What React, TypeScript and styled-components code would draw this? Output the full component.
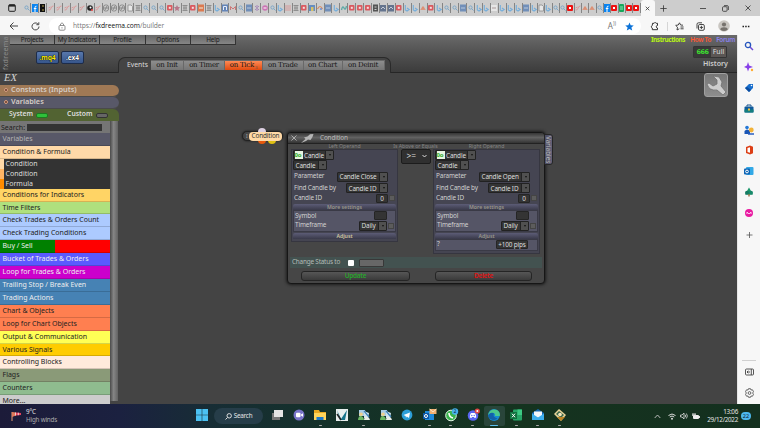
import React from 'react';
import styled, { createGlobalStyle } from 'styled-components';

const GlobalStyle = createGlobalStyle`
  * {
    box-sizing: border-box;
  }
  body {
    margin: 0;
    overflow: hidden;
    font-family: 'Noto Sans', 'Open Sans', sans-serif;
  }
  svg {
    display: block;
    flex: none;
  }
`;

const Screen = styled.div`
  width: 760px;
  height: 428px;
  display: flex;
  flex-direction: column;
  background: #444;
  font-size: 7px;
  line-height: 1;
  white-space: nowrap;
  overflow: hidden;
`;

// Browser chrome
const TabStrip = styled.div`
  height: 16px;
  flex: none;
  display: flex;
  background: #cdcdcd;
`;

const TabMenu = styled.div`
  width: 23.5px;
  padding: 4px 0 0 8px;
`;

const MiniTab = styled.div<{ $narrow?: boolean }>`
  width: ${(p) => (p.$narrow ? 7.35 : 7.93)}px;
  height: 16px;
  flex: none;
  display: flex;
  align-items: center;
  justify-content: center;
  border-right: 1px solid #8f8f8f;
  border-image: linear-gradient(transparent 20%, #858585 20%, #858585 80%, transparent 80%) 1;
`;

const ActiveTab = styled.div`
  width: 14px;
  height: 16px;
  background: #f7f7f7;
  border-radius: 3px 3px 0 0;
  display: flex;
  align-items: center;
  justify-content: center;
`;

const WindowButtons = styled.div`
  flex: 1;
  display: flex;
  align-items: center;
  padding-left: 5px;
`;

const AddressBar = styled.div`
  height: 19px;
  flex: none;
  display: flex;
  align-items: center;
  background: #f7f7f7;
  padding: 1px 0 0 9px;
`;

const UrlField = styled.div`
  width: 592px;
  height: 16px;
  margin-left: 9px;
  padding: 0 7px 0 9px;
  display: flex;
  align-items: center;
  border-radius: 8px;
  background: #fff;
`;

const Url = styled.div`
  flex: 1;
  margin-left: 7px;
  font-family: 'Open Sans', sans-serif;
  font-size: 6.7px;
  letter-spacing: -0.05px;
  color: #777;
  b {
    font-weight: 400;
    color: #111;
  }
`;

const ToolIcons = styled.div`
  flex: 1;
  display: flex;
  align-items: center;
  padding-left: 9px;
`;

const Middle = styled.div`
  height: 369px;
  flex: none;
  display: flex;
`;

const Page = styled.div`
  width: 737px;
  display: flex;
  flex-direction: column;
  background: #444;
`;

const EdgeBar = styled.div`
  flex: 1;
  display: flex;
  flex-direction: column;
  align-items: center;
  background: #f7f7f7;
  border-left: 1px solid #e6e6e6;
  padding-top: 6px;
`;

const EdgeItem = styled.div<{ $h?: number }>`
  height: ${(p) => p.$h || 20.9}px;
  display: flex;
  flex: none;
  justify-content: center;
`;

const EdgeRule = styled.div`
  width: 14px;
  height: 1px;
  margin: auto 0 7px;
  background: #d0d0d0;
`;

// Site header
const Header = styled.div`
  height: 38px;
  flex: none;
  display: flex;
  background: linear-gradient(#6a6a6a, #585858 35%, #3c3c3c);
  border-bottom: 1px solid #262626;
`;

const Brand = styled.div`
  width: 10px;
  display: flex;
  align-items: center;
  justify-content: center;
  writing-mode: vertical-rl;
  transform: rotate(180deg);
  color: #8e8e8e;
  font-size: 7px;
  letter-spacing: 0.3px;
`;

const HeaderMain = styled.div`
  flex: 1;
`;

const Menu = styled.div`
  width: 226px;
  height: 9.5px;
  display: flex;
  background: linear-gradient(#666, #868686);
  border-bottom: 1px solid #333;
`;

const MenuItem = styled.div`
  flex: 1;
  height: 9px;
  border-right: 1px solid #333;
  text-align: center;
  font-size: 6.4px;
  letter-spacing: -0.15px;
  line-height: 9px;
  color: #1c1c1c;
`;

const HeaderLower = styled.div`
  display: flex;
  height: 28.5px;
`;

const FileButtons = styled.div`
  width: 108px;
  padding: 6.5px 0 0 26px;
  display: flex;
  gap: 2px;
`;

const FileButton = styled.div<{ $color: string }>`
  width: 23px;
  height: 13px;
  border: 1px solid #1d2c4a;
  border-radius: 2px;
  background: linear-gradient(#5878ac, #37568c);
  color: ${(p) => p.$color};
  font-size: 6.6px;
  font-weight: 700;
  line-height: 11px;
  text-align: center;
  text-shadow: 0 0 1px #000, 0 0 1px #000;
`;

const EventsTab = styled.div`
  width: 273px;
  height: 16px;
  margin-top: 12.5px;
  padding: 2.4px 0 0 8px;
  display: flex;
  background: #444;
  border: 1px solid #2a2a2a;
  border-bottom: 0;
  border-radius: 7px 7px 0 0;
`;

const EventsLabel = styled.div`
  width: 24px;
  font-size: 6.8px;
  line-height: 9px;
  color: #ddd;
`;

const EventButton = styled.div<{ $w: number; $active?: boolean }>`
  width: ${(p) => p.$w}px;
  height: 10px;
  background: ${(p) => (p.$active ? 'linear-gradient(#ff8a55, #e04a10)' : 'linear-gradient(#8d8d8d, #757575)')};
  border: 1px solid #686868;
  border-width: 1px 1px 0 0;
  color: #161616;
  font-family: 'DejaVu Serif', serif;
  font-size: 7px;
  letter-spacing: -0.28px;
  line-height: 8px;
  text-align: center;
  sub {
    font-size: 4px;
    line-height: 1px;
    color: #555;
  }
`;

const HeaderRight = styled.div`
  width: 100px;
  padding-right: 9px;
  display: flex;
  flex-direction: column;
  align-items: flex-end;
`;

const Links = styled.div`
  display: flex;
  gap: 5px;
  margin-right: -7px;
  height: 10px;
  font-size: 6.4px;
  line-height: 9px;
`;

const SiteLink = styled.span<{ $color: string; $bold?: boolean }>`
  color: ${(p) => p.$color};
  font-weight: ${(p) => (p.$bold ? 700 : 600)};
  letter-spacing: ${(p) => (p.$bold ? -0.4 : -0.3)}px;
`;

const Mode = styled.div`
  display: flex;
  width: 34px;
  height: 12px;
  margin: 1px 1px 0 0;
  border: 1px solid #343434;
  border-radius: 1px;
  font-size: 7px;
  line-height: 10px;
  color: #ddd;
  text-align: center;
  background: #5b5654;
  b {
    width: 17px;
    background: #383838;
    color: #3ddb31;
    font-family: 'DejaVu Sans', sans-serif;
    font-size: 6.4px;
    letter-spacing: -0.4px;
  }
  span {
    flex: 1;
  }
`;

const History = styled.div`
  font-size: 7.1px;
  font-weight: 600;
  line-height: 11px;
  color: #ccc;
`;

// Left panel
const Workspace = styled.div`
  flex: 1;
  min-height: 0;
  display: flex;
`;

const SidePanel = styled.div`
  width: 119px;
  height: 331px;
  display: flex;
  flex-direction: column;
  overflow: hidden;
`;

const Ex = styled.div`
  height: 11.5px;
  flex: none;
  padding-left: 4px;
  font-family: 'Liberation Serif', serif;
  font-style: italic;
  font-size: 10.5px;
  line-height: 10px;
  color: #d4d4d4;
`;

const SideHead = styled.div<{ $bg: string }>`
  height: 12.3px;
  flex: none;
  display: flex;
  align-items: center;
  gap: 3px;
  padding: 0 0 1px 4px;
  border-bottom: 1px solid #4a4a4a;
  border-radius: 0 6px 6px 0;
  background: ${(p) => p.$bg};
  color: #d5cdc6;
  font-size: 7.3px;
  font-weight: 600;
`;

const Dot = styled.span`
  width: 4px;
  height: 4px;
  border: 1px solid #d9a184;
  border-radius: 50%;
  background: #5d3524;
`;

const Switches = styled.div`
  height: 12px;
  flex: none;
  display: flex;
  align-items: center;
  padding: 0 0 1px 9px;
  background: #526332;
  border-radius: 0 6px 0 0;
  color: #ddd;
  font-size: 6.8px;
  font-weight: 600;
`;

const Lamp = styled.span<{ $on?: boolean }>`
  width: 12px;
  height: 5px;
  flex: none;
  margin: 1px 19px 0 3px;
  border: 1px solid ${(p) => (p.$on ? '#1d7a20' : '#333')};
  border-radius: 2px;
  background: ${(p) => (p.$on ? '#2fc03a' : '#666')};
`;

const ListArea = styled.div`
  flex: 1;
  min-height: 0;
  display: flex;
`;

const List = styled.div`
  width: 110px;
  overflow: hidden;
`;

const Scroll = styled.div`
  width: 8px;
  height: 280px;
  background: linear-gradient(90deg, #4a4a4a, #858585 45%, #626262);
`;

const Search = styled.div`
  height: 12.2px;
  display: flex;
  align-items: center;
  padding-left: 1px;
  background: #757575;
  color: #1d1d1d;
  font-size: 7px;
`;

const SearchBox = styled.div`
  width: 75px;
  height: 7px;
  margin-left: 2px;
  background: #333;
`;

const Category = styled.div<{ $bg: string; $color?: string }>`
  height: 12.92px;
  padding-left: 2.5px;
  background: ${(p) => p.$bg};
  border-bottom: 1px solid rgba(0, 0, 0, 0.16);
  color: ${(p) => p.$color || '#222'};
  font-size: 7px;
  line-height: 11.9px;
`;

const SubItem = styled.div<{ $mark: string }>`
  height: 9.85px;
  padding-left: 1.6px;
  border-left: 4px solid ${(p) => p.$mark};
  background: #333;
  color: #ddd;
  font-size: 7px;
  line-height: 9px;
`;

// Canvas
const Canvas = styled.div`
  flex: 1;
  position: relative;
  display: flex;
  justify-content: flex-end;
  padding: 0 9px 0 0;
`;

const WrenchButton = styled.div`
  width: 24px;
  height: 24px;
  border: 1px solid #a0a0a0;
  border-radius: 3px;
  background: linear-gradient(#777, #8e8e8e);
`;

const Node = styled.div`
  position: absolute;
  left: 123px;
  top: 58px;
  width: 41px;
  height: 10px;
  display: flex;
  border: 1px solid #222;
  border-radius: 5px;
  background: #454545;
  color: #aaa;
  font-size: 5px;
  line-height: 8px;
  padding-left: 3px;
  box-shadow: 0 0 2px #111;
`;

const Port = styled.span<{ $x: number; $y: number; $color: string }>`
  position: absolute;
  left: ${(p) => p.$x}px;
  top: ${(p) => p.$y}px;
  width: 8px;
  height: 8px;
  border-radius: 50%;
  background: ${(p) => p.$color};
`;

const NodeLabel = styled.div`
  position: absolute;
  left: 6px;
  top: 0;
  width: 33px;
  height: 9px;
  border-radius: 4px;
  background: #ffd9a6;
  color: #333;
  font-size: 6.4px;
  letter-spacing: -0.15px;
  line-height: 8px;
  text-align: center;
`;

const Dialog = styled.div`
  position: absolute;
  left: 168px;
  top: 59px;
  width: 258px;
  height: 152px;
  border: 1px solid #161616;
  border-radius: 4px;
  background: #464646;
  box-shadow: 0 0 3px 1px #1c1c1c;
`;

const DialogHead = styled.div`
  height: 11px;
  display: flex;
  align-items: center;
  padding-left: 3px;
  border-radius: 3px 3px 0 0;
  border-bottom: 1px solid #222;
  background: linear-gradient(#353535, #626262 45%, #333);
  color: #bbb;
  font-size: 6.4px;
  letter-spacing: -0.15px;
`;

const DialogTitle = styled.span`
  margin-left: 6px;
`;

const SideTab = styled.div`
  position: absolute;
  left: 256px;
  top: 1px;
  width: 9px;
  height: 31px;
  border: 1px solid #252525;
  border-radius: 0 3px 3px 0;
  background: linear-gradient(90deg, #4a4a60, #626278);
  color: #bbb;
  font-size: 6.4px;
  line-height: 7px;
  writing-mode: vertical-rl;
  text-align: center;
`;

const Operands = styled.div`
  height: 113px;
  display: flex;
  padding: 0 4px 0 3px;
  align-items: flex-start;
  justify-content: space-between;
`;

const Operand = styled.div`
  width: 107px;
`;

const Caption = styled.div`
  height: 5px;
  color: #858585;
  font-size: 5.2px;
  line-height: 4.6px;
  text-align: center;
`;

const OperandBox = styled.div`
  border: 1px solid #363640;
  background: #454552;
  padding: 0 1px 2px;
`;

const Picker = styled.div<{ $w: number }>`
  width: ${(p) => p.$w}px;
  height: 10px;
  display: flex;
  align-items: center;
  border: 1px solid #222;
  border-radius: 1px;
  background: #343434;
  color: #ddd;
  font-size: 6.4px;
  letter-spacing: -0.15px;
  line-height: 7px;
  padding-left: 1.5px;
`;

const Arrow = styled.span`
  width: 8px;
  height: 8px;
  margin-left: auto;
  flex: none;
  display: flex;
  align-items: center;
  justify-content: center;
  border-left: 1px solid #222;
  background: #505050;
  &::after {
    content: '';
    border: 1.6px solid transparent;
    border-top: 2px solid #111;
    border-bottom: 0;
  }
`;

const Chip = styled.span`
  width: 8px;
  height: 8px;
  flex: none;
  margin: 0 1.5px 0 -1px;
  background: #e6f5df;
  color: #33ac2c;
  font-size: 6px;
  font-weight: 700;
  line-height: 8px;
`;

const Param = styled.div<{ $h?: number }>`
  height: ${(p) => p.$h || 10}px;
  display: flex;
  align-items: center;
  padding-left: 1px;
  color: #d0d0d0;
  font-size: 6.4px;
  letter-spacing: -0.15px;
`;

const Push = styled.span`
  flex: 1;
`;

const Square = styled.span`
  width: 6px;
  height: 6px;
  margin: 0 1px;
  border: 1px solid #444;
  background: #5c5c5c;
`;

const Gap = styled.span<{ $w: number }>`
  width: ${(p) => p.$w}px;
`;

const Value = styled.div<{ $w: number }>`
  width: ${(p) => p.$w}px;
  height: 9px;
  border: 1px solid #252525;
  border-radius: 1px;
  background: #343434;
  color: #ddd;
  font-size: 6.4px;
  line-height: 7px;
  text-align: center;
`;

const Fold = styled.div<{ $color?: string }>`
  height: 6px;
  margin-top: 1px;
  overflow: hidden;
  background: linear-gradient(#5c5c76, #3a3a4a);
  border-radius: 2px 2px 0 0;
  color: ${(p) => p.$color || '#9a988c'};
  font-size: 5.2px;
  font-weight: 600;
  line-height: 6px;
  text-align: center;
`;

const FoldBody = styled.div`
  border: 1px solid #3a3a46;
  background: #555566;
`;

const Compare = styled.div`
  width: 30px;
`;

const WideCaption = styled(Caption)`
  margin: 0 -8px;
`;

const CompareBox = styled.div`
  width: 30px;
  height: 15px;
  display: flex;
  align-items: center;
  justify-content: space-between;
  padding: 0 2px 0 5px;
  border: 1px solid #1c1c1c;
  border-radius: 2px;
  background: #303030;
  color: #ddd;
  font-size: 8.4px;
`;

const StatusRow = styled.div`
  height: 11px;
  margin: 0 2px;
  padding-left: 2px;
  display: flex;
  align-items: center;
  background: #435250;
  color: #b4bcb8;
  font-size: 6.4px;
  letter-spacing: -0.2px;
`;

const Check = styled.span`
  width: 6px;
  height: 6px;
  margin: 0 5px 0 8px;
  border-radius: 1px;
  background: #fff;
`;

const StatusInput = styled.span`
  width: 25px;
  height: 8px;
  border: 1px solid #383838;
  border-radius: 1px;
  background: #676767;
`;

const Actions = styled.div`
  display: flex;
  justify-content: space-between;
  padding: 3px 12px 0 13px;
`;

const ActionButton = styled.div<{ $w: number; $color: string }>`
  width: ${(p) => p.$w}px;
  height: 10px;
  border: 1px solid #252525;
  border-radius: 3px;
  background: linear-gradient(#565656, #3a3a3a);
  color: ${(p) => p.$color};
  font-size: 6.4px;
  letter-spacing: -0.25px;
  font-weight: 600;
  line-height: 8px;
  text-align: center;
`;

// Taskbar
const Taskbar = styled.div`
  flex: 1;
  display: flex;
  align-items: center;
  background: linear-gradient(90deg, #1c1b39 0, #1b2140 120px, #172d35 210px, #143129 330px, #15331f 520px, #14301f);
  color: #e5e5e5;
`;

const Weather = styled.div`
  width: 184px;
  padding-left: 10px;
  display: flex;
  align-items: center;
  gap: 4px;
  font-size: 6.3px;
  letter-spacing: -0.2px;
  line-height: 8px;
  small {
    display: block;
    font-size: 6.3px;
    color: #aaa;
  }
`;

const SearchPill = styled.div`
  width: 49px;
  height: 16px;
  margin: 0 3px 0 -1px;
  display: flex;
  align-items: center;
  justify-content: center;
  gap: 2px;
  border-radius: 8px;
  background: #263d49;
  font-size: 6.3px;
  letter-spacing: -0.2px;
`;

const TaskItem = styled.div<{ $run?: string; $active?: boolean; $start?: boolean }>`
  width: ${(p) => (p.$start ? 27 : 21.75)}px;
  margin-left: ${(p) => (p.$start ? 4 : 0)}px;
  height: 20px;
  display: flex;
  flex-direction: column;
  align-items: center;
  justify-content: space-between;
  padding-top: 3px;
  border-radius: 2px;
  background: ${(p) => (p.$active ? '#29453a' : 'transparent')};
  &::after {
    content: '';
    width: ${(p) => (p.$active ? 8 : 3)}px;
    height: 1.5px;
    border-radius: 1px;
    background: ${(p) => p.$run || 'transparent'};
  }
`;

const Tray = styled.div`
  flex: 1;
  display: flex;
  align-items: center;
  justify-content: flex-end;
  padding-right: 9px;
`;

const TrayIcons = styled.div`
  display: flex;
  align-items: center;
  gap: 4px;
  svg:first-child {
    margin-right: 3px;
  }
`;

const Clock = styled.div`
  margin: 0 3px 0 7px;
  text-align: right;
  font-size: 6.3px;
  letter-spacing: -0.28px;
  line-height: 8px;
`;

const DayBadge = styled.div`
  width: 10px;
  height: 8px;
  border-radius: 4px;
  background: #4cb8ee;
  color: #123;
  font-size: 5.5px;
  line-height: 8px;
  text-align: center;
`;

// one letter per open tab, left to right
const tabs = 'sfkpppppcpgggdhsssrthrohbnmslxvsbihryalbwrrrezzrbbjrbsslsbbubbblbdbssRpjjsfRGRR';

const favicon: Record<string, React.ReactNode> = {
  s: <><circle cx="2.5" cy="2.5" r="1.6" fill="none" stroke="#7da8c9" /><path d="M3.7 3.7L5.5 5.5" stroke="#7da8c9" /></>,
  f: <><rect width="6" height="8" y="-1" fill="#0b84f0" /><path d="M4.5 1.2Q2.9 1 3 2.6V7M1.8 3.5H4.4" stroke="#fff" fill="none" /></>,
  k: <><rect width="5" height="8" y="-1" fill="#111" /><path d="M2 1H4M2 5H4" stroke="#b5a14a" /></>,
  p: <path d="M.5 5Q2.5 5.5 3 3.2T5.5 1M.5 3L2.5 2" stroke="#dc9a9a" fill="none" />,
  c: <><circle cx="3" cy="3" r="2.8" fill="#222" /><circle cx="3.5" cy="2.5" r="1" fill="#fff" /><path d="M4 5H6" stroke="#e44" strokeWidth="1.5" /></>,
  g: <><rect x=".5" y="0" width="5" height="6" rx="2" fill="none" stroke="#8a8a8a" /><path d="M1 3H5M2 5L4 1" stroke="#8a8a8a" /></>,
  d: <path d="M1 0H4L5.5 1.5V6H1Z" fill="#e8e8e8" stroke="#8a8a8a" strokeWidth=".8" />,
  h: <path d="M.5 .5H5.5M1 3H5M.5 5.5H5.5M2 .5V5.5M4 .5V5.5" stroke="#8a8a8a" strokeWidth=".9" />,
  r: <><rect width="5.5" height="5.5" rx="1" fill="#d95a60" /><rect x="1.8" y="1.8" width="2" height="2" fill="#f5dede" /></>,
  R: <><rect width="6" height="6" rx="1" fill="#ee1111" /><rect x="2" y="2" width="2" height="2" fill="#fff" /></>,
  t: <path d="M3 0L4 2H6L4.5 4L5 6L3 5L1 6L1.5 4L0 2H2Z" fill="#b77789" />,
  o: <><rect width="6" height="7" y="-.5" fill="#dc7a50" /><path d="M1 3H5" stroke="#eed" /></>,
  b: <path d="M1.3 0V5L3 6L5.2 4.5L3 3" fill="none" stroke="#75aedb" strokeWidth="1.1" />,
  n: <><rect width="6" height="7" y="-.5" fill="#6485b8" /><path d="M1.5 5V1.5H4.5V5" stroke="#e8eef8" fill="none" /></>,
  m: <path d="M.5 5V1.5L3 4L5.5 1.5V5" fill="none" stroke="#c77" />,
  l: <><rect width="6" height="7" y="-.5" fill="#718fb9" /><path d="M1 3H5" stroke="#cdd9e8" strokeWidth=".8" /></>,
  x: <path d="M1 1L2.5 2.5M5 1L3.5 2.5M1 5L2.5 3.5M5 5L3.5 3.5M3 0V6" stroke="#a588b8" />,
  v: <><circle cx="3" cy="3" r="2.8" fill="#cc75b5" /><path d="M1.5 3H4.5" stroke="#fff" /></>,
  i: <path d="M0 1H6M0 3H6M0 5H6" stroke="#d59a9a" />,
  y: <><rect width="6" height="6" fill="#668dc0" /><rect x="2" y="2" width="2.5" height="4" fill="#d8c268" /></>,
  a: <><path d="M.5 4Q3 -1 5.5 4" fill="none" stroke="#d48962" strokeWidth="1.2" /><circle cx="4" cy="4" r="1" fill="#6d8ed0" /></>,
  w: <path d="M.5 5Q1.5 0 3 3T5.5 1" stroke="#5ba8a5" fill="none" strokeWidth="1.3" />,
  e: <><rect width="5" height="7" y="-.5" fill="#555" /><path d="M1.5 2H3.5M1.5 4.5H3.5" stroke="#ccc" /></>,
  z: <><rect width="6" height="6.5" fill="#64748e" /><path d="M1 4L3 2L5 4" stroke="#c5ccd8" fill="none" /></>,
  j: <path d="M.5 4.5H5.5M1.5 3.5L3 1.5L4.5 3.5Z" stroke="#dd8a6c" fill="#dd8a6c" strokeWidth=".8" />,
  u: <><rect width="6" height="6" fill="#e6e6e6" /><path d="M1 3H5" stroke="#a99" /></>,
  G: <><rect width="5" height="8" y="-1" rx="1" fill="#16a85c" /><path d="M1 2H4M1 4H4" stroke="#b5e5c8" strokeWidth=".8" /></>,
};

const categories: [string, string, string?][] = [
  ['Conditions for Indicators', '#ffd465'],
  ['Time Filters', '#afe07e'],
  ['Check Trades & Orders Count', '#accaff'],
  ['Check Trading Conditions', '#accaff'],
  ['Buy / Sell', 'linear-gradient(90deg, #008000 50%, #ff0000 50%)', '#eee'],
  ['Bucket of Trades & Orders', '#5a5aff', '#eee'],
  ['Loop for Trades & Orders', '#cc00cc', '#eee'],
  ['Trailing Stop / Break Even', '#4682b4', '#eee'],
  ['Trading Actions', '#4682b4', '#eee'],
  ['Chart & Objects', '#ff7f50'],
  ['Loop for Chart Objects', '#ff7f50'],
  ['Output & Communication', '#ffff55'],
  ['Various Signals', '#ffcc00'],
  ['Controlling Blocks', '#ffebdc'],
  ['Flags', '#8a9a78'],
  ['Counters', '#8fbc8f'],
  ['More...', '#cccccc'],
];

const events = [
  { name: 'on Init', w: 33 },
  { name: 'on Timer', w: 41 },
  { name: 'on Tick', w: 38, active: true },
  { name: 'on Trade', w: 40.5 },
  { name: 'on Chart', w: 39 },
  { name: 'on Deinit', w: 42 },
];

const edgeIcons: React.ReactNode[] = [
  <><circle cx="4" cy="4" r="2.6" fill="none" stroke="#2455bd" strokeWidth="1.3" /><path d="M6 6L9 9" stroke="#6c4bd4" strokeWidth="1.5" /></>,
  <><path d="M4 0L5.2 3.6L9 5L5.2 6.2L4 9.5L2.9 6.2L0 5L2.9 3.6Z" fill="#8840e8" /><circle cx="8" cy="8" r="1.2" fill="#ffad33" /></>,
  <><path d="M1 5L5 1H9V5L5 9Z" fill="#176dcc" /><path d="M1 5L5 9L7 7L3 4Z" fill="#0b4c9e" /><circle cx="7.5" cy="2.5" r=".8" fill="#fff" /></>,
  <><path d="M3 2.5V1H7V2.5" fill="none" stroke="#14508d" /><rect x="0.5" y="2.5" width="9" height="6" rx="1" fill="#0f5a9c" /><rect x=".5" y="5.5" width="9" height="3" fill="#137e7e" /><rect x="4" y="4.5" width="2" height="2" fill="#f8c53a" /></>,
  <><circle cx="3" cy="2.5" r="1.8" fill="#2478d6" /><path d="M.5 9V6Q3 3 6 6V9Z" fill="#1a56b5" /><circle cx="7.3" cy="5" r="2.4" fill="#f2b237" /><path d="M4 9H10" stroke="#285ec1" strokeWidth="1.5" /></>,
  <><path d="M6 0.5L2 2V8L6 9.5L9 8.3V1.7Z" fill="#dc3e15" /><path d="M3.5 3L6 2.3V7.8L3.5 7Z" fill="#fff" /></>,
  <><rect x="2" y="1" width="7.5" height="8" rx="1" fill="#32a9e7" /><rect y="2.5" width="6" height="6" rx="1" fill="#0d64b5" /><circle cx="3" cy="5.5" r="1.4" fill="none" stroke="#fff" /></>,
  <><path d="M5 .5L9 7.5H1Z" fill="#1b966b" /><circle cx="3" cy="5.8" r="2" fill="#157b62" /><circle cx="7" cy="5.8" r="2" fill="#18896a" /><path d="M5 7V9.5" stroke="#8a5522" strokeWidth="1.2" /></>,
  <><circle cx="5" cy="5" r="4" fill="#e81ba1" /><path d="M3 6V4L5 6L7 4V6" fill="none" stroke="#ffc4eb" /></>,
];

const strategy = (
  <>
    <path d="M1 1H7L8 7H1Z" fill="#a9cde6" />
    <path d="M6 2L11 4L10 9H6Z" fill="#cfe3ee" />
    <circle cx="3" cy="5.2" r="1.8" fill="#efcf8c" />
    <path d="M0 11Q.5 6.5 3 7T6 11Z" fill="#6cb865" />
    <path d="M6 11Q6.5 7 9 7.5T12 11Z" fill="#e8ede6" />
    <path d="M6 2L11 8" stroke="#3f83b9" strokeWidth="1.2" />
  </>
);

const taskIcons: { icon: React.ReactNode; run?: string; active?: boolean }[] = [
  { icon: <><rect x="1" y="4" width="8" height="7" fill="#777" /><rect x="3" y="1" width="9" height="7" fill="#e4e4e4" /></> },
  { icon: <><circle cx="6" cy="6" r="5.5" fill="#7873c9" /><rect x="3" y="3.8" width="4.5" height="4.4" rx="1" fill="#fff" /><path d="M8 5.5L10 4.3V7.7L8 6.5Z" fill="#fff" /></> },
  { icon: <><path d="M0 1H5L6 3H12V11H0Z" fill="#e9a922" /><rect y="4" width="12" height="7" fill="#ffd45a" /><rect x="2.5" y="8" width="7" height="3" fill="#1c79cb" /></>, run: '#aaa' },
  { icon: <><rect width="12" height="12" fill="#e8eeee" /><path d="M1 1L5 10L11 1L9 11H4Z" fill="#17748b" /><path d="M1 5L5 11" stroke="#222" strokeWidth="1.5" /></> },
  { icon: strategy, run: '#aaa' },
  { icon: strategy },
  { icon: <><circle cx="6" cy="6" r="5.4" fill="#2d9fd8" /><path d="M2.5 6L9 3.5L8 9L5.8 7.5L5 8.7L4.6 6.9Z" fill="#fff" /></> },
  { icon: <><rect x="2" y="2" width="9" height="9" fill="#1f8adb" /><rect y="4" width="6" height="6" fill="#0a57a6" /><circle cx="3" cy="7" r="1.5" fill="none" stroke="#fff" /><rect x="6.5" y="0" width="7" height="5" fill="#f2b071" /><path d="M6.5 0L10 3L13.5 0" fill="none" stroke="#fff0dc" strokeWidth=".8" /></>, run: '#aaa' },
  { icon: <><circle cx="6" cy="6.5" r="5.3" fill="#39b54e" stroke="#e6f5e8" /><path d="M4 4Q4 8 8 9" stroke="#fff" strokeWidth="1.6" fill="none" /><circle cx="10" cy="2.5" r="3.2" fill="#47b2ec" /><text x="8.8" y="4.3" fontSize="4.5" fill="#123">2</text></>, run: '#aaa' },
  { icon: <><circle cx="6" cy="6.5" r="5.3" fill="#5865f2" /><path d="M2.8 8.5Q3 4 4.5 4H7.5Q9 4 9.2 8.5L7.5 9L7 8H5L4.5 9Z" fill="#fff" /><circle cx="4.8" cy="6.5" r=".7" fill="#5865f2" /><circle cx="7.2" cy="6.5" r=".7" fill="#5865f2" /><circle cx="10.3" cy="2" r="2.6" fill="#e04848" /><circle cx="10.3" cy="2" r="1" fill="#fff" /></>, run: '#aaa' },
  { icon: <><circle cx="6" cy="6" r="5.9" fill="#168bd0" /><path d="M.5 4.5Q3 -1 9 .9Q12.5 3 11.8 7H6.8Q8 5 5.5 4Q3 3 .5 6Z" fill="#4bc88d" /><path d="M.4 6Q3 2.5 6 4.6Q4 8 9.5 9.5Q4 13.5 .4 8Z" fill="#1260ab" /></>, run: '#5cc1ef', active: true },
  { icon: <><rect x="3" y=".5" width="9" height="11" rx="1" fill="#27a567" /><rect x="7.5" y=".5" width="4.5" height="5.5" fill="#3dca83" /><rect y="3" width="7" height="7" fill="#10713e" /><path d="M2 4.7L5 8.3M5 4.7L2 8.3" stroke="#fff" /></>, run: '#aaa' },
  { icon: <><path d="M0 4L6 0L12 4V11H0Z" fill="#1769b4" /><path d="M2 2.5H10V7L6 9L2 7Z" fill="#f4f7fa" /><path d="M0 4.5L6 8.5L12 4.5V11H0Z" fill="#3daeeb" /></>, run: '#aaa' },
  { icon: <><path d="M0 5L5 0L12 6L7 12Z" fill="#e8d398" /><path d="M2 5L5 2L10 6L7 9Z" fill="#3b674b" /><circle cx="6" cy="5.5" r="1.8" fill="#f6e7bc" /><path d="M3 8L7 12L11 8" fill="#bd8424" /></>, run: '#aaa' },
];

interface OperandProps {
  title: string;
  price: string;
  adjusted?: boolean;
}

const OperandPanel: React.FC<OperandProps> = ({ title, price, adjusted }) => {
  return (
    <Operand>
      <Caption>{title}</Caption>
      <OperandBox>
        <Picker $w={41}><Chip>0o</Chip>Candle<Arrow /></Picker>
        <Picker $w={34}>Candle<Arrow /></Picker>
        <Param $h={13}>Parameter<Push /><Picker $w={51}>{price}<Arrow /></Picker><Gap $w={8} /></Param>
        <Param>Find Candle by<Push /><Picker $w={42}>Candle ID<Arrow /></Picker><Gap $w={8} /></Param>
        <Param>Candle ID<Push /><Value $w={12}>0</Value><Square /></Param>
        <Fold>More settings</Fold>
        <FoldBody>
          <Param $h={9.5}>Symbol<Push /><Value $w={13} /><Gap $w={8} /></Param>
          <Param $h={10}>Timeframe<Push /><Picker $w={28}>Daily<Arrow /></Picker><Square /></Param>
        </FoldBody>
        <Fold $color={adjusted ? undefined : '#cfc8a0'}>Adjust</Fold>
        {adjusted && (
          <FoldBody>
            <Param>?<Push /><Value $w={32}>+100 pips</Value><Gap $w={9} /></Param>
          </FoldBody>
        )}
      </OperandBox>
    </Operand>
  );
};

const ConditionDialog: React.FC = () => {
  return (
    <Dialog>
      <DialogHead>
        <svg width="6" height="6" viewBox="0 0 6 6"><path d="M.5 .5L5.5 5.5M5.5 .5L.5 5.5" stroke="#aaa" /></svg>
        <svg width="17" height="9" viewBox="-4 0 17 9">
          <path d="M0 9L4.5 5L3 3.5L6.5 2.5L9 .3L12.5 0L11.5 3L9.5 6L7 5.5L5 7Z" fill="#b5b5b5" />
        </svg>
        <DialogTitle>Condition</DialogTitle>
      </DialogHead>
      <SideTab>Variables</SideTab>
      <Operands>
        <OperandPanel title="Left Operand" price="Candle Close" />
        <Compare>
          <WideCaption>Is Above or Equals</WideCaption>
          <CompareBox>
            &gt;=
            <svg width="7" height="5" viewBox="0 0 7 5"><path d="M1.5 1L3.5 3L5.5 1" fill="none" stroke="#ddd" /></svg>
          </CompareBox>
        </Compare>
        <OperandPanel title="Right Operand" price="Candle Open" adjusted />
      </Operands>
      <StatusRow>Change Status to<Check /><StatusInput /></StatusRow>
      <Actions>
        <ActionButton $w={109} $color="#27a52b">Update</ActionButton>
        <ActionButton $w={97} $color="#e01010">Delete</ActionButton>
      </Actions>
    </Dialog>
  );
};

const ReadAloud = styled.span`
  font-size: 8px;
  color: #777;
  sup {
    font-size: 5px;
    line-height: 1px;
  }
`;

const BrowserChrome: React.FC = () => {
  return (
    <>
      <TabStrip>
        <TabMenu>
          <svg width="8" height="8" viewBox="0 0 8 8"><rect x=".7" y=".7" width="6.6" height="6.6" rx="1" fill="none" stroke="#222" /><path d="M1 1.7H7" stroke="#222" strokeWidth="1.8" /></svg>
        </TabMenu>
        {tabs.split('').map((t, index) => (
          <MiniTab key={index} $narrow={index > 63}>
            <svg width="6" height="6" viewBox="0 0 6 6" overflow="visible">{favicon[t]}</svg>
          </MiniTab>
        ))}
        <ActiveTab>
          <svg width="5" height="5" viewBox="0 0 5 5"><path d="M.7 .7L4.3 4.3M4.3 .7L.7 4.3" stroke="#333" strokeWidth=".8" /></svg>
        </ActiveTab>
        <WindowButtons>
          <svg width="7" height="7" viewBox="0 0 7 7"><path d="M3.5 .3V6.7M.3 3.5H6.7" stroke="#333" strokeWidth=".8" /></svg>
          <svg width="6" height="6" viewBox="0 0 6 6" style={{ marginLeft: 33 }}><path d="M0 3.5H6" stroke="#333" strokeWidth=".8" /></svg>
          <svg width="7" height="7" viewBox="0 0 7 7" style={{ marginLeft: 16 }}><rect x=".5" y="1.7" width="4.6" height="4.6" rx="1" fill="none" stroke="#333" strokeWidth=".8" /><path d="M2 .6H5Q6.4 .6 6.4 2V5" fill="none" stroke="#333" strokeWidth=".8" /></svg>
          <svg width="6" height="6" viewBox="0 0 6 6" style={{ marginLeft: 16 }}><path d="M.5 .5L5.5 5.5M5.5 .5L.5 5.5" stroke="#333" strokeWidth=".8" /></svg>
        </WindowButtons>
      </TabStrip>
      <AddressBar>
        <svg width="10" height="8" viewBox="0 0 10 8"><path d="M9 4H1M4.5 .5L1 4L4.5 7.5" fill="none" stroke="#444" /></svg>
        <svg width="9" height="9" viewBox="0 0 9 9" style={{ marginLeft: 12 }}><path d="M8 4.5A3.5 3.5 0 1 1 6.8 1.8M7.8 .3V2.7H5.4" fill="none" stroke="#444" /></svg>
        <UrlField>
          <svg width="8" height="9" viewBox="0 0 8 9"><rect x="1" y="3.5" width="6" height="4.7" rx="1" fill="none" stroke="#777" strokeWidth=".8" /><path d="M2.5 3.5V2Q4 -.3 5.5 2V3.5" fill="none" stroke="#777" strokeWidth=".8" /><circle cx="4" cy="5.8" r=".6" fill="#777" /></svg>
          <Url>https://<b>fxdreema.com</b>/builder</Url>
          <ReadAloud>A<sup>))</sup></ReadAloud>
          <svg width="9" height="9" viewBox="0 0 10 10" style={{ marginLeft: 9 }}><path d="M5 .5L6.3 3.5L9.7 3.8L7.1 6L8 9.5L5 7.7L2 9.5L2.9 6L.3 3.8L3.7 3.5Z" fill="#0b72d8" /></svg>
        </UrlField>
        <ToolIcons>
          <svg width="9" height="9" viewBox="0 0 9 9"><path d="M2.5 1.3H4A1.2 1.2 0 0 1 6.2 1.3H7.5V3.5A1.2 1.2 0 0 0 7.5 6V7.7H2.3V6A1.3 1.3 0 0 1 2.3 3.5Z" fill="none" stroke="#333" /></svg>
          <svg width="1" height="9" viewBox="0 0 1 9" style={{ marginLeft: 7.5 }}><rect width="1" height="9" fill="#d5d5d5" /></svg>
          <svg width="9" height="9" viewBox="0 0 9 9" style={{ marginLeft: 7 }}><path d="M8 3.2L5.6 3L4.5 .8L3.2 3L.7 3.4L2.5 5.2L2 8L4.3 6.8M5.5 5H8.6M5.5 6.8H8.6" fill="none" stroke="#333" strokeWidth=".9" /></svg>
          <svg width="9" height="9" viewBox="0 0 9 9" style={{ marginLeft: 12.5 }}><rect x="2.5" y="2.5" width="5.8" height="5.8" rx="1.3" fill="none" stroke="#333" strokeWidth=".9" /><path d="M1 6.5V2.3Q1 .8 2.5 .8H6M5.4 3.8V7M3.8 5.4H7" fill="none" stroke="#333" strokeWidth=".9" /></svg>
          <svg width="12" height="12" viewBox="0 0 12 12" style={{ marginLeft: 12.5 }}><circle cx="6" cy="6" r="5.8" fill="#c9c6c1" /><circle cx="6" cy="4.5" r="2.1" fill="#77736e" /><path d="M2.2 9.5Q2.5 7.2 6 7.2T9.8 9.5Q6 12.5 2.2 9.5Z" fill="#77736e" /></svg>
          <svg width="8" height="3" viewBox="0 0 8 3" style={{ marginLeft: 12.5 }}><path d="M.5 1.5H2M3.2 1.5H4.7M5.9 1.5H7.4" stroke="#222" strokeWidth="1.3" /></svg>
        </ToolIcons>
      </AddressBar>
    </>
  );
};

const SiteHeader: React.FC = () => {
  return (
    <Header>
      <Brand>fxdreema</Brand>
      <HeaderMain>
        <Menu>
          {['Projects', 'My Indicators', 'Profile', 'Options', 'Help'].map((m) => (
            <MenuItem key={m}>{m}</MenuItem>
          ))}
        </Menu>
        <HeaderLower>
          <FileButtons>
            <FileButton $color="#f3e70c">.mq4</FileButton>
            <FileButton $color="#fff">.ex4</FileButton>
          </FileButtons>
          <EventsTab>
            <EventsLabel>Events</EventsLabel>
            {events.map((e) => (
              <EventButton key={e.name} $w={e.w} $active={e.active}>
                {e.name}{e.active && <sub> 3</sub>}
              </EventButton>
            ))}
          </EventsTab>
        </HeaderLower>
      </HeaderMain>
      <HeaderRight>
        <Links>
          <SiteLink $color="#b8f513" $bold>Instructions</SiteLink>
          <SiteLink $color="#ff5630">How To</SiteLink>
          <SiteLink $color="#8c83f0">Forum</SiteLink>
        </Links>
        <Mode><b>666</b><span>Full</span></Mode>
        <History>History</History>
      </HeaderRight>
    </Header>
  );
};

const BlockList: React.FC = () => {
  return (
    <SidePanel>
      <Ex>EX</Ex>
      <SideHead $bg="#a07955"><Dot />Constants (Inputs)</SideHead>
      <SideHead $bg="#585868"><Dot />Variables</SideHead>
      <Switches>System<Lamp $on />Custom<Lamp /></Switches>
      <ListArea>
        <List>
          <Search>Search:<SearchBox /></Search>
          <Category $bg="#585868" $color="#b5b5b5">Variables</Category>
          <Category $bg="#ffd9a8">Condition &amp; Formula</Category>
          <SubItem $mark="#ffd9a8">Condition</SubItem>
          <SubItem $mark="#ffb565">Condition</SubItem>
          <SubItem $mark="#ff8c00">Formula</SubItem>
          {categories.map(([name, bg, color]) => (
            <Category key={name} $bg={bg} $color={color}>{name}</Category>
          ))}
        </List>
        <Scroll />
      </ListArea>
    </SidePanel>
  );
};

const WindowsBar: React.FC = () => {
  return (
    <Taskbar>
      <Weather>
        <svg width="12" height="12" viewBox="0 0 12 12"><path d="M2 2V11" stroke="#b88068" strokeWidth="1.3" /><path d="M2 2L6 2.5V5.5L2 7Z" fill="#e07a5a" /><path d="M6 2.5L11 3V5L6 5.5Z" fill="#e8405e" /><path d="M5.5 2.5V5.5M8.3 2.7V5.2" stroke="#f4cfd3" /></svg>
        <div>9°C<small>High winds</small></div>
      </Weather>
      <TaskItem $start>
        <svg width="12" height="12" viewBox="0 0 12 12"><path d="M0 0H5.7V5.7H0ZM6.3 0H12V5.7H6.3ZM0 6.3H5.7V12H0ZM6.3 6.3H12V12H6.3Z" fill="#4cc2f3" /></svg>
      </TaskItem>
      <SearchPill>
        <svg width="7" height="7" viewBox="0 0 7 7"><circle cx="4.2" cy="2.8" r="2.2" fill="none" stroke="#ddd" /><path d="M2.5 4.5L.5 6.5" stroke="#ddd" /></svg>
        Search
      </SearchPill>
      {taskIcons.map((t, index) => (
        <TaskItem key={index} $run={t.run} $active={t.active}>
          <svg width="12" height="12" viewBox="0 0 12 12" overflow="visible">{t.icon}</svg>
        </TaskItem>
      ))}
      <Tray>
        <TrayIcons>
          <svg width="7" height="5" viewBox="0 0 7 5"><path d="M.7 4L3.5 1L6.3 4" fill="none" stroke="#ccc" strokeWidth=".9" /></svg>
          <svg width="8" height="7" viewBox="0 0 8 7"><path d="M.5 2.5Q4 -.5 7.5 2.5M1.8 4Q4 2 6.2 4" fill="none" stroke="#ddd" /><circle cx="4" cy="5.7" r="1" fill="#ddd" /></svg>
          <svg width="8" height="8" viewBox="0 0 8 8"><path d="M.5 3V5H2L4 7V1L2 3ZM5.2 2.7Q6.2 4 5.2 5.3M6.4 1.5Q8.3 4 6.4 6.5" fill="none" stroke="#ddd" strokeWidth=".8" /></svg>
          <svg width="8" height="7" viewBox="0 0 8 7"><rect x="1" y="2" width="6" height="4" rx="1" fill="#eee" /><path d="M7.5 3V5M1 0V3M3 0V2M0 2H4" stroke="#ddd" /></svg>
        </TrayIcons>
        <Clock>13:06<br />29/12/2022</Clock>
        <DayBadge>22</DayBadge>
      </Tray>
    </Taskbar>
  );
};

const App: React.FC = () => {
  return (
    <Screen>
      <GlobalStyle />
      <BrowserChrome />
      <Middle>
        <Page>
          <SiteHeader />
          <Workspace>
            <BlockList />
            <Canvas>
              <WrenchButton>
                <svg width="22" height="22" viewBox="0 0 22 22">
                  <path d="M8 2L14 3L17 8L16 12L21 18L18 21L12 16Q4 17 2 10L4 9L8 12L12 10L12 6Z" fill="#cdcdcd" stroke="#707070" strokeWidth=".8" />
                </svg>
              </WrenchButton>
              <Node>
                <Port $x={15} $y={-4} $color="#ddd0e2" />
                <Port $x={15} $y={4} $color="#e8590c" />
                <Port $x={25} $y={4} $color="#dfc012" />
                I
                <NodeLabel>Condition</NodeLabel>
              </Node>
              <ConditionDialog />
            </Canvas>
          </Workspace>
        </Page>
        <EdgeBar>
          {edgeIcons.map((icon, index) => (
            <EdgeItem key={index}>
              <svg width="10" height="10" viewBox="0 0 10 10">{icon}</svg>
            </EdgeItem>
          ))}
          <EdgeItem>
            <svg width="7" height="12" viewBox="0 0 7 12"><path d="M3.5 3V9M.5 6H6.5" stroke="#555" strokeWidth=".8" /></svg>
          </EdgeItem>
          <EdgeRule />
          <EdgeItem $h={20}>
            <svg width="9" height="8" viewBox="0 0 9 8"><rect x=".5" y="1" width="8" height="6" rx="1" fill="none" stroke="#444" strokeWidth=".9" /><path d="M6.3 1V7M5 4H2M3.3 2.7L2 4L3.3 5.3" fill="none" stroke="#444" strokeWidth=".9" /></svg>
          </EdgeItem>
          <EdgeItem $h={16}>
            <svg width="9" height="10" viewBox="0 0 9 10"><path d="M3.5 .7H5.5L6 2L7.5 1.8L8.5 3.7L7.6 5L8.5 6.3L7.5 8.2L6 8L5.5 9.3H3.5L3 8L1.5 8.2L.5 6.3L1.4 5L.5 3.7L1.5 1.8L3 2Z" fill="none" stroke="#444" strokeWidth=".8" /><circle cx="4.5" cy="5" r="1.4" fill="none" stroke="#444" strokeWidth=".8" /></svg>
          </EdgeItem>
        </EdgeBar>
      </Middle>
      <WindowsBar />
    </Screen>
  );
};

export default App;
